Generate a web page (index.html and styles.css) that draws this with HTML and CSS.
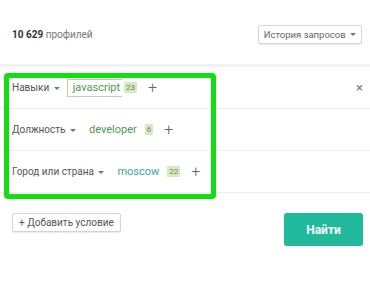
FILE: index.html
```html
<!DOCTYPE html>
<html lang="ru">
<head>
  <meta charset="UTF-8">
  <title>Поиск профилей</title>
  <link rel="stylesheet" href="styles.css">
</head>
<body>
  <div class="page">
    <div class="header">
      <div class="count"><b>10 629</b> профилей</div>
      <button class="history-btn">История запросов <span class="caret"></span></button>
    </div>
    <div class="filters">
      <div class="filter-row">
        <span class="field">Навыки <span class="caret"></span></span>
        <span class="tag tag-input">javascript</span>
        <span class="badge">23</span>
        <span class="plus">+</span>
        <span class="close">&times;</span>
      </div>
      <div class="filter-row">
        <span class="field">Должность <span class="caret"></span></span>
        <span class="tag">developer</span>
        <span class="badge">6</span>
        <span class="plus">+</span>
      </div>
      <div class="filter-row">
        <span class="field">Город или страна <span class="caret"></span></span>
        <span class="tag tag-teal">moscow</span>
        <span class="badge">22</span>
        <span class="plus">+</span>
      </div>
      <div class="highlight"></div>
    </div>
    <div class="footer">
      <button class="add-btn">+ Добавить условие</button>
      <button class="search-btn">Найти</button>
    </div>
  </div>
</body>
</html>
```

FILE: styles.css
```css
body {
  margin: 0;
  font-family: Roboto, 'Noto Sans', sans-serif;
  font-size: 11px;
  color: #555;
  background-color: #fff;
}
button {
  font-family: inherit;
  cursor: pointer;
  white-space: nowrap;
}
.header {
  display: flex;
  justify-content: space-between;
  align-items: center;
  height: 67px;
  padding: 4px 8px 0 12px;
  box-sizing: border-box;
  border-bottom: 3px solid #f2f2f2;
}
.count {
  font-size: 10px;
  color: #777;
}
.count b {
  color: #333;
}
.history-btn {
  height: 19px;
  padding: 0 5px;
  font-size: 9.5px;
  color: #666;
  background-color: #fff;
  border: 1px solid #d6d6d6;
  border-radius: 2px;
  box-shadow: 0 1px 1px rgba(0, 0, 0, 0.08);
}
.caret {
  display: inline-block;
  width: 0;
  height: 0;
  margin-left: 2px;
  vertical-align: middle;
  border-left: 3px solid transparent;
  border-right: 3px solid transparent;
  border-top: 3px solid #777;
}
.filters {
  position: relative;
}
.filter-row {
  display: flex;
  align-items: center;
  height: 41px;
  padding-left: 12px;
  border-bottom: 1px solid #eee;
}
.field {
  font-size: 10px;
  color: #555;
  margin-right: 7px;
}
.field .caret {
  margin-left: 2px;
}
.tag {
  padding: 0 5px;
  font-size: 11px;
  color: #4e9a4e;
  line-height: 16px;
  border: 1px solid transparent;
}
.tag-input {
  border-color: #b9d7a6;
  border-right: none;
  padding-right: 2px;
}
.tag-teal {
  color: #3fa59a;
}
.badge {
  margin-left: 2px;
  padding: 0 2px;
  font-size: 8px;
  line-height: 11px;
  color: #6b8f52;
  background-color: #d8e8c4;
  border-radius: 1px;
}
.plus {
  margin-left: 11px;
  font-size: 16px;
  font-weight: 300;
  color: #666;
  line-height: 16px;
}
.close {
  margin-left: auto;
  margin-right: 7px;
  font-size: 13px;
  color: #777;
}
.highlight {
  position: absolute;
  left: 4px;
  top: 6px;
  width: 212px;
  height: 126px;
  box-sizing: border-box;
  border: 5px solid #12df12;
  border-radius: 4px;
  pointer-events: none;
}
.footer {
  display: flex;
  justify-content: space-between;
  align-items: flex-start;
  padding: 20px 7px 0 12px;
}
.add-btn {
  height: 19px;
  padding: 0 6px;
  font-size: 10px;
  color: #555;
  background-color: #fff;
  border: 1px solid #d4d4d4;
  border-radius: 2px;
  box-shadow: 0 1px 1px rgba(0, 0, 0, 0.08);
}
.search-btn {
  width: 79px;
  height: 33px;
  font-size: 12px;
  font-weight: bold;
  color: #fff;
  background-color: #20b99b;
  border: none;
  border-radius: 3px;
  box-shadow: 0 2px 2px rgba(0, 0, 0, 0.15);
}
```
